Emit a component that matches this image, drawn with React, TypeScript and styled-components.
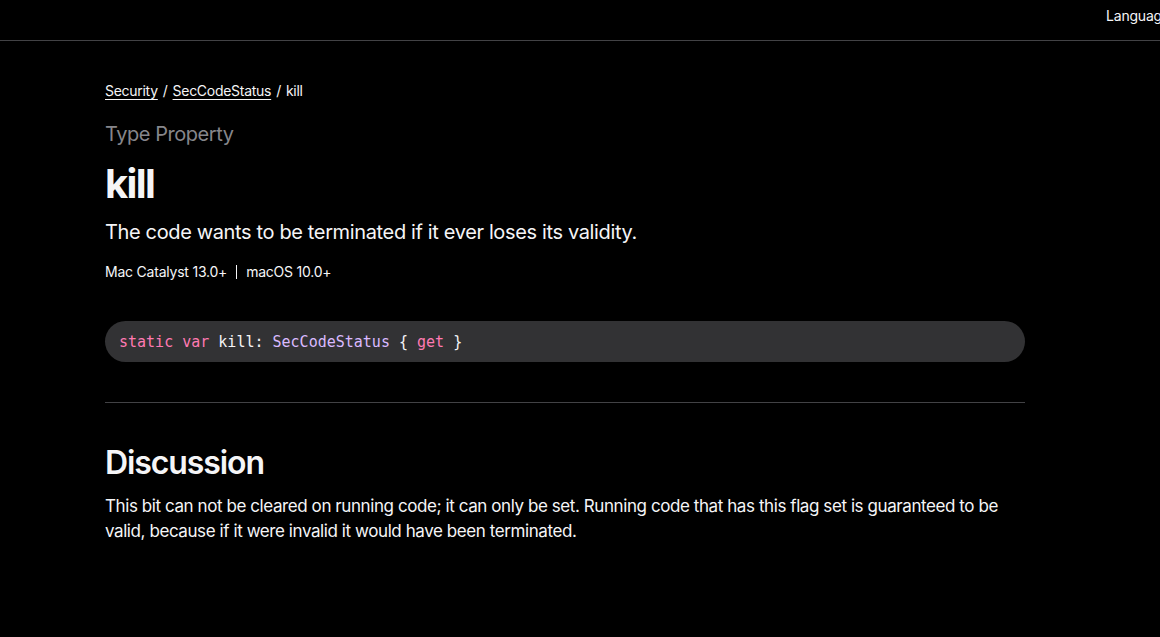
import styled, { createGlobalStyle } from 'styled-components';

const GlobalStyle = createGlobalStyle`
  html, body {
    margin: 0;
    padding: 0;
    background: #000;
    color: #f5f5f7;
    font-family: Inter, "Noto Sans", sans-serif;
    overflow-x: hidden;
  }
`;

// Top bar
const Nav = styled.header`
  height: 40px;
  border-bottom: 1px solid #424245;
  display: flex;
  justify-content: flex-end;
  align-items: flex-start;
  overflow: hidden;
`;

const NavTools = styled.div`
  width: 54px;
  flex-shrink: 0;
  margin-top: 6px;
  white-space: nowrap;
  font-size: 14px;
  line-height: 20px;
  letter-spacing: -0.2px;
  color: #f5f5f7;
`;

const Main = styled.main`
  width: 920px;
  margin: 0 0 0 105px;
  padding-top: 40px;
`;

const Breadcrumbs = styled.nav`
  display: flex;
  gap: 5px;
  font-size: 14px;
  line-height: 20px;
  letter-spacing: -0.28px;
`;

const Crumb = styled.a`
  color: #f5f5f7;
  text-decoration: underline;
  text-underline-offset: 3px;
`;

const Sep = styled.span`
  color: #f5f5f7;
`;

const Eyebrow = styled.div`
  margin-top: 20px;
  font-size: 20px;
  line-height: 26px;
  letter-spacing: -0.45px;
  color: #86868b;
`;

const Title = styled.h1`
  margin: 13px 0 0;
  font-size: 40px;
  line-height: 48px;
  font-weight: 700;
  letter-spacing: -1.6px;
  color: #f5f5f7;
`;

const Abstract = styled.p`
  margin: 10px 0 0;
  font-size: 20px;
  line-height: 28px;
  letter-spacing: -0.36px;
  color: #f5f5f7;
`;

const Availability = styled.div`
  margin-top: 17px;
  display: flex;
  align-items: center;
  gap: 9px;
  font-size: 14px;
  line-height: 18px;
  letter-spacing: -0.22px;
  color: #f5f5f7;
`;

const Divider = styled.span`
  width: 1px;
  height: 14px;
  background: #f5f5f7;
`;

const CodeBlock = styled.pre`
  margin: 40px 0 0;
  height: 41px;
  box-sizing: border-box;
  padding: 0 14px;
  display: flex;
  align-items: center;
  background: #323234;
  border-radius: 21px;
  font-family: "DejaVu Sans Mono", "Liberation Mono", monospace;
  font-size: 15px;
  color: #f5f5f7;
`;

const Token = styled.span<{ $kind: 'keyword' | 'type' }>`
  color: ${p => (p.$kind === 'keyword' ? '#ff7ab2' : '#dabaff')};
`;

const Rule = styled.hr`
  margin: 40px 0 0;
  border: 0;
  border-top: 1px solid #424245;
`;

const SectionTitle = styled.h2`
  margin: 41px 0 0;
  font-size: 32px;
  line-height: 38px;
  font-weight: 600;
  letter-spacing: -1.1px;
  color: #f5f5f7;
`;

const Body = styled.p`
  margin: 12px 0 0;
  font-size: 17px;
  line-height: 25px;
  letter-spacing: -0.42px;
  color: #f5f5f7;
`;

export default function App() {
  return (
    <>
      <GlobalStyle />
      <Nav>
        <NavTools>Language: Swift</NavTools>
      </Nav>
      <Main>
        <Breadcrumbs>
          <Crumb>Security</Crumb>
          <Sep>/</Sep>
          <Crumb>SecCodeStatus</Crumb>
          <Sep>/</Sep>
          <span>kill</span>
        </Breadcrumbs>
        <Eyebrow>Type Property</Eyebrow>
        <Title>kill</Title>
        <Abstract>The code wants to be terminated if it ever loses its validity.</Abstract>
        <Availability>
          <span>Mac Catalyst 13.0+</span>
          <Divider />
          <span>macOS 10.0+</span>
        </Availability>
        <CodeBlock>
          <code>
            <Token $kind="keyword">static</Token> <Token $kind="keyword">var</Token> kill:{' '}
            <Token $kind="type">SecCodeStatus</Token> {'{'} <Token $kind="keyword">get</Token> {'}'}
          </code>
        </CodeBlock>
        <Rule />
        <SectionTitle>Discussion</SectionTitle>
        <Body>
          This bit can not be cleared on running code; it can only be set. Running code that has
          this flag set is guaranteed to be valid, because if it were invalid it would have been
          terminated.
        </Body>
      </Main>
    </>
  );
}
